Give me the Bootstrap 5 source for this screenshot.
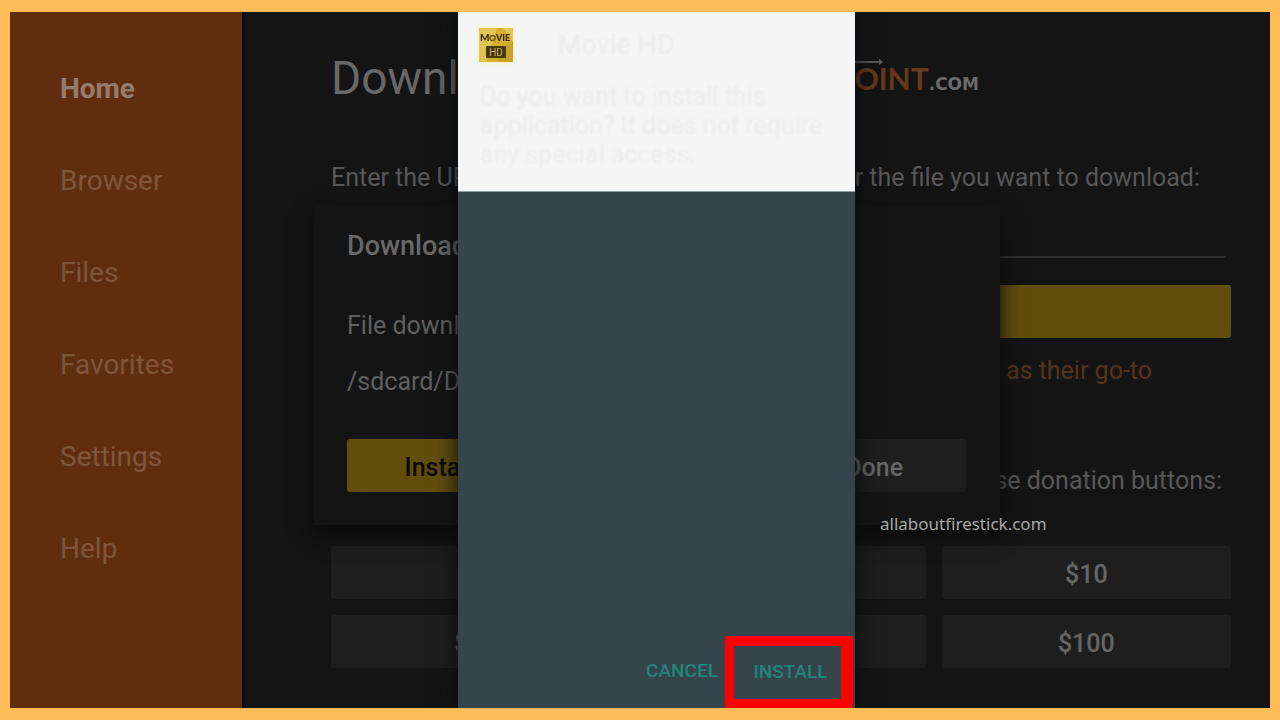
<!DOCTYPE html>
<html lang="en">
<head>
<meta charset="utf-8">
<meta name="viewport" content="width=device-width, initial-scale=1">
<title>Downloader</title>
<link href="https://cdn.jsdelivr.net/npm/bootstrap@5.3.0/dist/css/bootstrap.min.css" rel="stylesheet">
<style>
  body { background: #ffbd59; font-family: Roboto, "Liberation Sans", sans-serif; font-size: 25px; line-height: 32px; color: #585858; }
  .stage { min-height: 100vh; border: solid #ffbd59; border-width: 12px 10px; background: #141414; }
  .side { width: 232px; background: #602e0f; padding: 31px 0 0 50px; box-shadow: 1px 0 5px #000; }
  .side a { font-size: 28px; line-height: 92px; color: #7f563c; text-decoration: none; }
  .side a.active { color: #957b6b; font-weight: 700; }
  .screen { padding: 38px 39px 39px 89px; min-width: 0; }
  .screen h1 { font-size: 46px; line-height: 56px; font-weight: 400; color: #686868; }
  .site-logo { margin-right: 28%; font-family: Lato, sans-serif; color: #777; }
  .site-logo .point { font-size: 30px; line-height: 40px; font-weight: 700; color: #66391b; }
  .site-logo .dotcom { font-family: "DejaVu Sans", sans-serif; font-size: 17px; line-height: 24px; font-weight: 700; color: #6c6c6c; }
  .site-logo svg { top: 0; right: 96px; }
  .prompt { margin-top: 56px; padding-right: 31px; }
  .url { height: 48px; margin: 16px 5px 0; background: transparent; border: 0; border-bottom: 2px solid #303030; }
  .btn { --bs-btn-border-width: 0; --bs-btn-border-radius: 3px; height: 53px; padding: 4px 0 0; font-size: 25px; font-weight: 500; line-height: 32px; color: #666; background: #1e1e1e; }
  .btn.gold { background: #624e0c; color: #0e0907; }
  .go { margin-top: 27px; }
  .tagline { margin-top: 17px; padding-right: 79px; color: #573319; }
  .donate { margin-top: 78px; padding-right: 9px; }
  .amounts { display: grid; grid-template-columns: repeat(3, 1fr); gap: 16px; margin-top: 49px; }
  .saved { left: 304px; top: 193px; width: 686px; height: 320px; padding: 25px 34px 33px 33px; background: #141414; box-shadow: 0 10px 20px #0a0a0a; }
  .saved h2 { font-size: 27px; line-height: 32px; font-weight: 500; color: #686868; margin: 0; }
  .saved .note { color: #606060; }
  .saved .btns { display: grid; grid-template-columns: repeat(3, 1fr); gap: 34px; }
  .installer { left: 448px; top: 0; bottom: 0; width: 397px; background: #36444b; box-shadow: 0 0 22px #070b0e; }
  .installer header { height: 180px; padding: 15px 20px; background: #f5f5f5; border-bottom: 1px solid #949da1; }
  .installer header svg { width: 36px; height: 36px; filter: drop-shadow(0 0 2px #fff0a0); }
  .ghost { color: #ebebeb; filter: blur(1px); }
  .ghost-name { font-size: 27px; margin-left: 44px; }
  .ghost-body { line-height: 29px; margin: 19px 0 0 2px; font-size: 25px; }
  .installer footer .btn { background: none; color: #21857a; font-size: 19px; height: 53px; width: 107px; border-radius: 0; padding: 0 0 2px 6px; }
  .installer footer .cancel { width: 86px; padding-left: 0; }
  .marked { border: solid red; border-width: 10px 12px 9px 9px; border-radius: 2px 2px 0 0; margin-right: 2px; }
  .watermark { left: 870px; top: 500px; font-family: "Noto Sans", sans-serif; font-size: 17px; line-height: 24px; color: #a8a8a8; }
</style>
</head>
<body>
<div class="stage d-flex position-relative overflow-hidden">
  <nav class="side d-flex flex-column flex-shrink-0" aria-label="Main">
    <a href="#" class="active">Home</a>
    <a href="#">Browser</a>
    <a href="#">Files</a>
    <a href="#">Favorites</a>
    <a href="#">Settings</a>
    <a href="#">Help</a>
  </nav>

  <main class="screen flex-grow-1">
    <div class="d-flex justify-content-between align-items-center">
      <h1 class="m-0">Downl</h1>
      <div class="site-logo position-relative text-nowrap d-flex align-items-baseline">
        <span class="point">OINT</span><span class="dotcom">.COM</span>
        <svg class="position-absolute" width="40" height="8" viewBox="0 0 40 8" aria-hidden="true"><path d="M0 4H36" stroke="#555" stroke-width="2"/><path d="M36 1l4 3-4 3z" fill="#606060"/></svg>
      </div>
    </div>
    <div class="prompt d-flex justify-content-between text-nowrap"><label for="url">Enter the UR</label><span>r the file you want to download:</span></div>
    <div class="d-flex"><input id="url" class="url flex-grow-1" type="text"></div>
    <button class="btn gold go w-100 d-block" type="button" aria-label="Go"></button>
    <div class="tagline text-end">as their go-to</div>
    <div class="donate text-end">se donation buttons:</div>
    <div class="amounts">
      <button class="btn" type="button" aria-label="Donate $1"></button>
      <button class="btn" type="button" aria-label="Donate $5"></button>
      <button class="btn" type="button">$10</button>
      <button class="btn" type="button">$20</button>
      <button class="btn" type="button" aria-label="Donate $50"></button>
      <button class="btn" type="button">$100</button>
    </div>
  </main>

  <section class="saved position-absolute d-flex flex-column" aria-label="Download">
    <h2>Download</h2>
    <div class="note mt-5">File downl</div>
    <div class="note mt-4">/sdcard/D</div>
    <div class="btns mt-auto">
      <button class="btn gold" type="button">Install</button>
      <button class="btn" type="button" aria-label="Delete"></button>
      <button class="btn" type="button">Done</button>
    </div>
  </section>

  <section class="installer position-absolute d-flex flex-column justify-content-between" aria-label="Install application">
    <header>
      <div class="d-flex align-items-center">
        <svg viewBox="0 0 36 36" role="img" aria-label="Movie HD">
          <path fill="#d5b02f" d="M1 1h34v34H1z"/><path fill="#e0c455" d="M1 1h18L8 35H1zM25 1h10v14z"/><path fill="#c8a32a" d="M24 20l11-6v21H20z"/>
          <g font-family="Lato, sans-serif" font-weight="900" fill="#3a2b0b"><text x="2" y="14" font-size="10">M</text><text x="18" y="14" font-size="9">VIE</text></g>
          <circle cx="14.500" cy="11" r="2.500" fill="none" stroke="#765b1c" stroke-width="1.500"/>
          <rect x="8" y="19" width="20" height="12" rx="1" fill="#4b390e"/>
          <text x="18" y="29" font-family="Roboto, sans-serif" font-size="10" text-anchor="middle" fill="#cdb15b">HD</text>
        </svg>
        <div class="ghost ghost-name">Movie HD</div>
      </div>
      <p class="ghost ghost-body text-nowrap">Do you want to install this<br>application? It does not require<br>any special access.</p>
    </header>
    <footer class="d-flex justify-content-end align-items-center">
      <button class="btn cancel" type="button">CANCEL</button>
      <div class="marked"><button class="btn d-block" type="button">INSTALL</button></div>
    </footer>
  </section>

  <div class="watermark position-absolute">allaboutfirestick.com</div>
</div>
<script src="https://cdn.jsdelivr.net/npm/bootstrap@5.3.0/dist/js/bootstrap.bundle.min.js"></script>
</body>
</html>
